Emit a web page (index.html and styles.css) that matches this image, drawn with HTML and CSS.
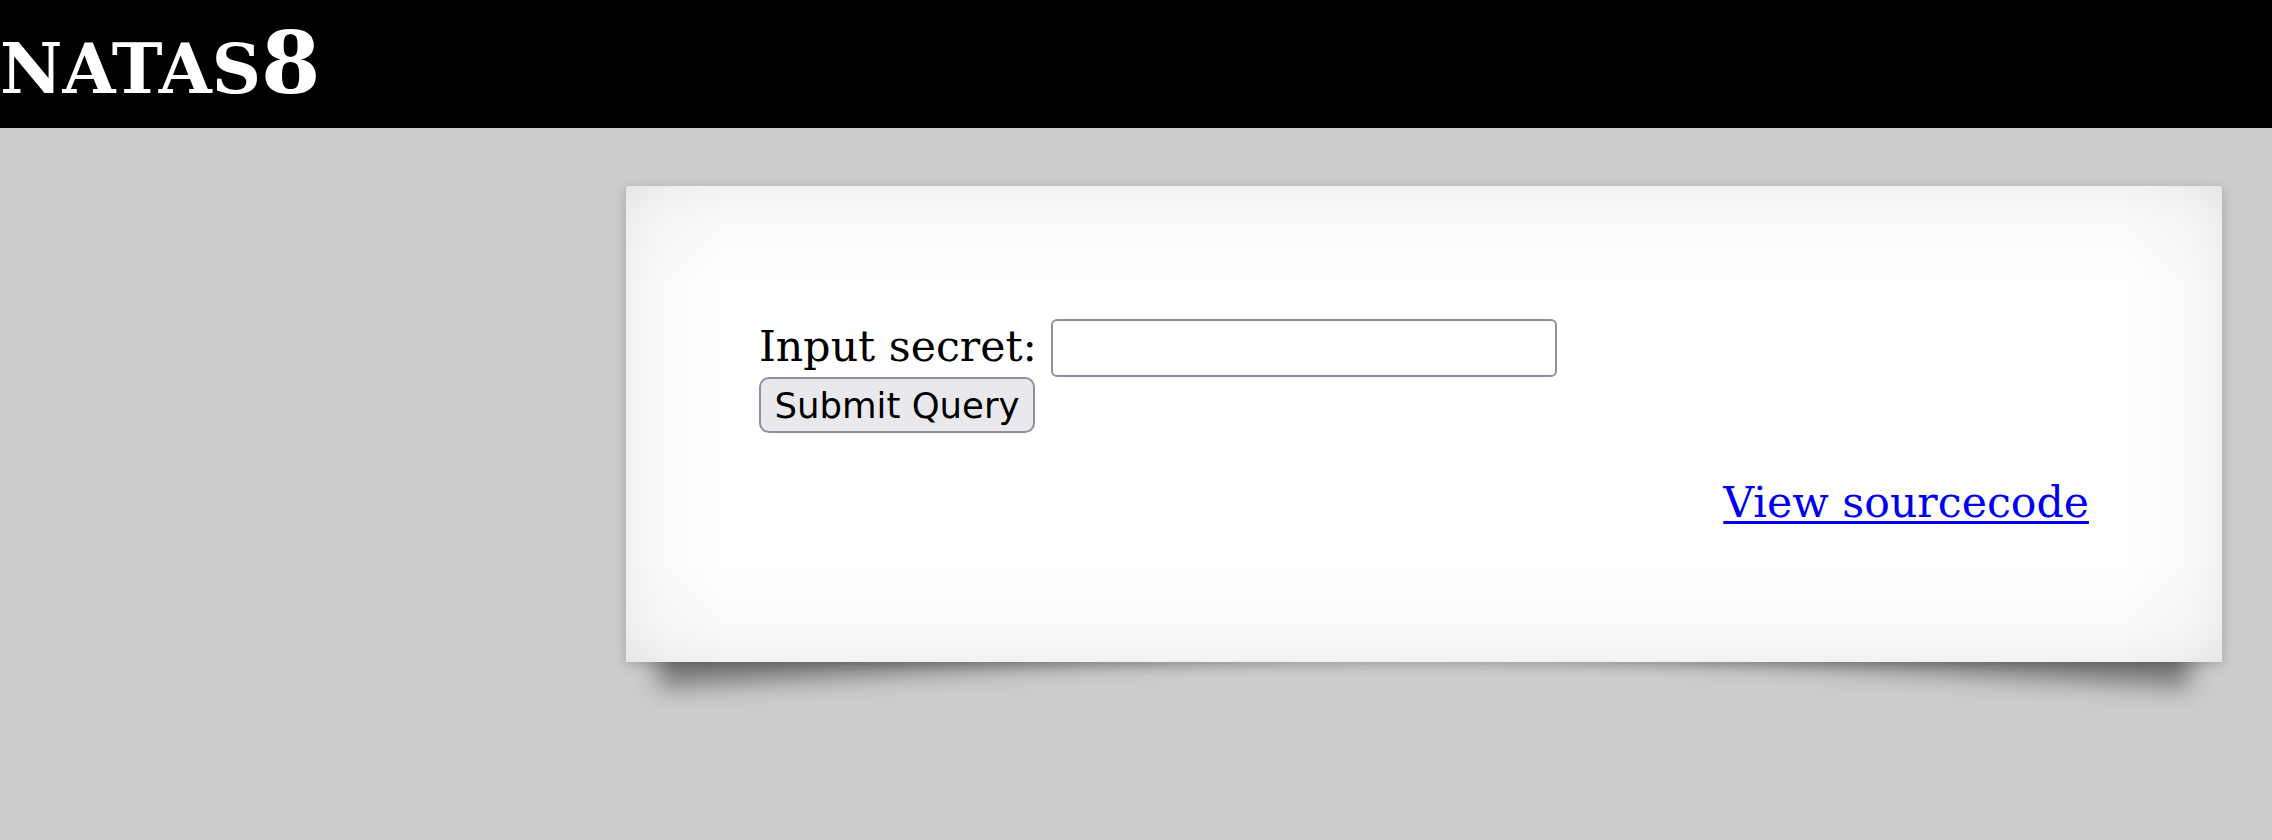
FILE: index.html
```html
<!DOCTYPE html>
<html>
<head>
<meta charset="utf-8">
<title>natas8</title>
<link rel="stylesheet" href="styles.css">
</head>
<body>
<h1 class="title"><span class="title-caps">NATAS</span>8</h1>
<div class="content-wrap">
  <div class="content">
    <form class="secret-form" method="post">
      <div class="form-line">Input secret: <input class="secret-input" name="secret"></div>
      <div class="form-line"><input class="submit-btn" type="submit" name="submit" value="Submit Query"></div>
    </form>
    <div class="viewsource"><a class="viewsource-link" href="index-source.html">View sourcecode</a></div>
  </div>
</div>
</body>
</html>
```
FILE: styles.css
```css
html, body {
  margin: 0;
  padding: 0;
}
html {
  min-height: 100%;
}
body {
  background: #ccc;
  font-family: "DejaVu Serif", serif;
  font-size: 42.67px;
  color: #000;
  min-height: 840px;
}
.title {
  margin: 0;
  background: #000;
  color: #fff;
  font-family: "DejaVu Serif", serif;
  font-weight: bold;
  font-size: 85.33px;
  line-height: 99px;
  padding: 14px 0 15px 0;
  height: 99px;
}
.title-caps {
  font-size: 68.3px;
}
.content-wrap {
  position: relative;
  z-index: 0;
  width: 1596px;
  margin: 58px 50px 120px auto;
}
/* lifted-corner shadows under the sheet */
.content-wrap::before,
.content-wrap::after {
  content: "";
  position: absolute;
  z-index: -1;
  bottom: 38px;
  left: 27px;
  width: 48%;
  height: 20%;
  max-width: 800px;
  box-shadow: 0 40px 25px rgba(0,0,0,0.42);
  transform: rotate(-3.5deg);
}
.content-wrap::after {
  left: auto;
  right: 27px;
  transform: rotate(3.5deg);
}
.content {
  position: relative;
  padding: 133px;
  box-shadow: 0 3px 11px rgba(0,0,0,0.2);
  background:
    linear-gradient(to right, rgba(0,0,0,0.05), rgba(0,0,0,0.018) 35px, rgba(0,0,0,0) 100px),
    linear-gradient(to left, rgba(0,0,0,0.05), rgba(0,0,0,0.018) 35px, rgba(0,0,0,0) 100px),
    linear-gradient(to bottom, rgba(0,0,0,0.05), rgba(0,0,0,0.018) 35px, rgba(0,0,0,0) 100px),
    linear-gradient(to top, rgba(0,0,0,0.05), rgba(0,0,0,0.018) 35px, rgba(0,0,0,0) 100px),
    #fff;
}
.secret-form {
  margin: 0 0 42.67px 0;
}
.form-line {
  line-height: 1.164;
}
.secret-input {
  box-sizing: border-box;
  width: 506px;
  height: 58px;
  font-family: "DejaVu Sans", sans-serif;
  font-size: 35.5px;
  padding: 5px 6px;
  margin: 0;
  border: 2.67px solid #8f8f9d;
  border-radius: 6px;
  background: #fff;
  vertical-align: baseline;
}
.submit-btn {
  box-sizing: border-box;
  width: 276px;
  height: 56px;
  font-family: "DejaVu Sans", sans-serif;
  font-size: 35.5px;
  color: #000;
  padding: 0;
  margin: 0;
  border: 2.67px solid #8f8f9d;
  border-radius: 10px;
  background: #e9e9ed;
  vertical-align: top;
}
.viewsource {
  text-align: right;
  line-height: 53px;
}
.viewsource-link {
  color: #0000ee;
  text-decoration: underline;
  text-decoration-thickness: 3px;
  text-underline-offset: 4px;
}
```
